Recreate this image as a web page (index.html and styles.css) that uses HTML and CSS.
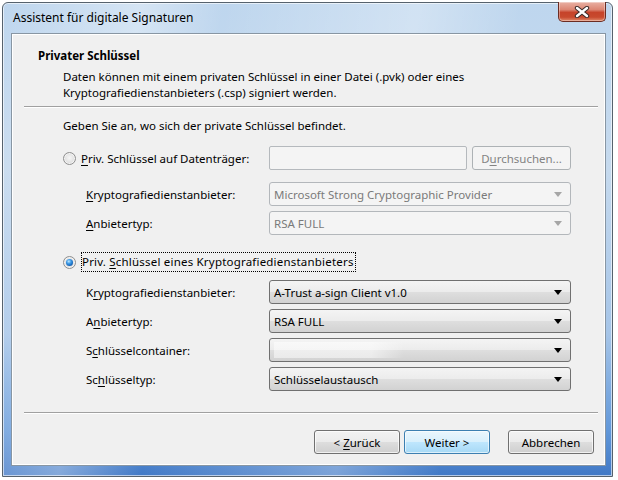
FILE: index.html
```html
<!DOCTYPE html>
<html lang="de">
  <head>
    <meta charset="UTF-8" />
    <title>Assistent für digitale Signaturen</title>
    <link rel="stylesheet" href="styles.css">
  </head>
  <body>
    <div class="window">
      <div class="titlebar">
        <span class="title">Assistent für digitale Signaturen</span>
        <div class="close">
          <svg width="16" height="12" viewBox="0 0 16 12">
            <path d="M3 2 L13 10 M13 2 L3 10" stroke="#3a2a28" stroke-width="4.4" stroke-linecap="round" />
            <path d="M3 2 L13 10 M13 2 L3 10" stroke="#ffffff" stroke-width="2.4" stroke-linecap="round" />
          </svg>
        </div>
      </div>

      <div class="client">
        <div class="header">
          <h1>Privater Schlüssel</h1>
          <p>
            Daten können mit einem privaten Schlüssel in einer Datei (.pvk) oder eines<br />
            Kryptografiedienstanbieters (.csp) signiert werden.
          </p>
        </div>
        <div class="sep"></div>

        <div class="body">
          <p class="intro">Geben Sie an, wo sich der private Schlüssel befindet.</p>

          <div class="option-row first">
            <span class="radio"></span>
            <span class="option-label"><u>P</u>riv. Schlüssel auf Datenträger:</span>
            <span class="textbox disabled"></span>
            <span class="btn small disabled"><span>D<u>u</u>rchsuchen...</span></span>
          </div>
          <div class="field-row gap-lg">
            <span class="field-label"><u>K</u>ryptografiedienstanbieter:</span>
            <span class="combo disabled"><span>Microsoft Strong Cryptographic Provider</span><i class="arrow"></i></span>
          </div>
          <div class="field-row">
            <span class="field-label"><u>A</u>nbietertyp:</span>
            <span class="combo disabled"><span>RSA FULL</span><i class="arrow"></i></span>
          </div>

          <div class="option-row second">
            <span class="radio checked"></span>
            <span class="focus-label">Priv. <u>S</u>chlüssel eines Kryptografiedienstanbieters</span>
          </div>
          <div class="field-row gap-md">
            <span class="field-label">K<u>r</u>yptografiedienstanbieter:</span>
            <span class="combo"><span>A-Trust a-sign Client v1.0</span><i class="arrow"></i></span>
          </div>
          <div class="field-row">
            <span class="field-label">A<u>n</u>bietertyp:</span>
            <span class="combo"><span>RSA FULL</span><i class="arrow"></i></span>
          </div>
          <div class="field-row">
            <span class="field-label">S<u>c</u>hlüsselcontainer:</span>
            <span class="combo"><span class="glow"></span><i class="arrow"></i></span>
          </div>
          <div class="field-row">
            <span class="field-label">Sc<u>h</u>lüsseltyp:</span>
            <span class="combo"><span>Schlüsselaustausch</span><i class="arrow"></i></span>
          </div>
        </div>

        <div class="sep bottom"></div>
        <div class="buttons">
          <span class="btn"><span>&lt; <u>Z</u>urück</span></span>
          <span class="btn default"><span>Weiter &gt;</span></span>
          <span class="btn cancel"><span>Abbrechen</span></span>
        </div>
      </div>
    </div>
  </body>
</html>
```

FILE: styles.css
```css
* {
  box-sizing: border-box;
}

html,
body {
  margin: 0;
  padding: 0;
  background: #ffffff;
  font-family: "Noto Sans", sans-serif;
  font-size: 11.5px;
  color: #000;
}

.window {
  margin: 2px 0 0 2px;
  width: 611px;
  border: 1px solid #56626d;
  border-radius: 6px 6px 0 0;
  padding-bottom: 10px;
  box-shadow: inset 0 0 0 1px rgba(255, 255, 255, 0.6);
  background:
    linear-gradient(100deg, transparent 0, rgba(255, 255, 255, 0.35) 20%, transparent 32%, rgba(255, 255, 255, 0.3) 60%, transparent 75%),
    linear-gradient(to bottom, #bed6ee 0, #c6daee 35%, #a6c5e8 70%, #6399da 90%, #4179c6 100%);
}

/* title bar */
.titlebar {
  height: 30px;
  display: flex;
  justify-content: space-between;
  align-items: flex-start;
  padding: 0 6px 0 10px;
}

.title {
  font-size: 12px;
  line-height: 30px;
  color: #000;
}

.close {
  width: 48px;
  height: 20px;
  margin-top: -1px;
  border: 1px solid #6b2c22;
  border-top: none;
  border-radius: 0 0 5px 5px;
  display: flex;
  align-items: center;
  justify-content: center;
  background: linear-gradient(to bottom, #e9b1a4 0, #dc8673 40%, #c6432a 55%, #c84a2e 80%, #e08a6c 100%);
  box-shadow: inset 0 0 0 1px rgba(255, 255, 255, 0.35);
}

/* client area */
.client {
  margin: 0 6px 0 8px;
  background: #f0f0f0;
  border: 1px solid #8896a3;
  box-shadow: inset 0 0 0 1px #ffffff;
  padding-bottom: 11px;
}

.header {
  padding: 14px 0 0 26px;
}

h1 {
  margin: 0;
  font-size: 11.5px;
  font-weight: bold;
  line-height: 16px;
}

.header p {
  margin: 5px 0 0 25px;
  line-height: 16px;
}

.sep {
  margin: 5px 7px 0 12px;
  height: 2px;
  border-top: 1px solid #a0a0a0;
  border-bottom: 1px solid #ffffff;
}

.sep.bottom {
  margin-top: 21px;
}

.body {
  padding-left: 51px;
}

.intro {
  margin: 10px 0 0 0;
  line-height: 16px;
}

.option-row {
  display: flex;
  align-items: center;
}

.option-row.first {
  margin-top: 12px;
  height: 24px;
}

.option-row.second {
  margin-top: 17px;
  height: 20px;
}

.radio {
  width: 13px;
  height: 13px;
  border-radius: 50%;
  border: 1px solid #8f8f8f;
  margin-right: 5px;
  background: radial-gradient(circle at 50% 45%, #f6f6f6 0, #e6e6e6 45%, #cdcdcd 100%);
  box-shadow: inset 0 0 0 1px #f4f4f4;
  position: relative;
}

.radio.checked::after {
  content: "";
  position: absolute;
  left: 2px;
  top: 2px;
  width: 7px;
  height: 7px;
  border-radius: 50%;
  background: radial-gradient(circle at 40% 35%, #bfe9ff 0, #3f9be6 35%, #1464b8 70%, #0b3f7a 100%);
}

.option-label {
  width: 188px;
  white-space: nowrap;
}

.focus-label {
  border: 1px dotted #000;
  padding: 1px 1px 2px 0;
  line-height: 15px;
  letter-spacing: 0.2px;
}

.textbox {
  width: 198px;
  height: 24px;
  border: 1px solid #b5b9bd;
  border-radius: 2px;
  background: #f4f4f4;
}

.field-row {
  display: flex;
  align-items: center;
  height: 24px;
  margin-top: 5px;
  padding-left: 23px;
}

.field-row.gap-lg {
  margin-top: 12px;
}

.field-row.gap-md {
  margin-top: 8px;
}

.field-label {
  width: 183px;
}

.combo {
  width: 302px;
  height: 24px;
  border: 1px solid #707070;
  border-radius: 3px;
  padding-left: 4px;
  display: flex;
  align-items: center;
  position: relative;
  background: linear-gradient(to bottom, #f4f4f4 0, #ececec 48%, #dedede 52%, #d2d2d2 100%);
}

.combo.disabled {
  border-color: #b3b7bb;
  background: #f4f4f4;
  color: #7a7a7a;
}

.arrow {
  position: absolute;
  right: 8px;
  top: 9px;
  width: 0;
  height: 0;
  border-left: 4px solid transparent;
  border-right: 4px solid transparent;
  border-top: 5px solid #000;
}

.combo.disabled .arrow {
  border-top-color: #a6a6a6;
}

.glow {
  width: 130px;
  height: 16px;
  background: linear-gradient(to right, rgba(255, 255, 255, 0.5) 75%, rgba(255, 255, 255, 0));
}

/* buttons */
.btn {
  width: 86px;
  height: 24px;
  display: flex;
  align-items: center;
  justify-content: center;
  border: 1px solid #707070;
  border-radius: 3px;
  background: linear-gradient(to bottom, #f2f2f2 0, #ebebeb 48%, #dddddd 52%, #cfcfcf 100%);
  box-shadow: inset 0 0 0 1px rgba(255, 255, 255, 0.7);
}

.btn.small {
  width: 99px;
  margin-left: 5px;
}

.btn.disabled {
  border-color: #adb2b5;
  background: #f4f4f4;
  color: #838383;
  box-shadow: none;
}

.btn.default {
  border-color: #3c7fb1;
  background: linear-gradient(to bottom, #eaf6fd 0, #d9f0fc 48%, #bee6fd 52%, #a7d9f5 100%);
  box-shadow: inset 0 0 0 1px rgba(255, 255, 255, 0.6);
}

.buttons {
  display: flex;
  justify-content: flex-end;
  gap: 4px;
  margin-top: 16px;
  padding-right: 11px;
}

.btn.cancel {
  margin-left: 14px;
}

u {
  text-decoration-thickness: 1px;
  text-underline-offset: 2px;
}
```
